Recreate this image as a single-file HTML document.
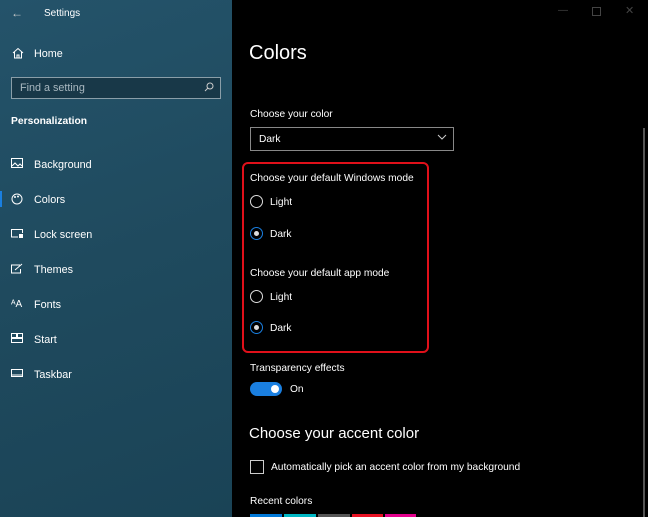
<!DOCTYPE html>
<html><head><style>
body{margin:0;width:648px;height:517px;overflow:hidden;background:#000;font-family:"Liberation Sans",sans-serif;position:relative}
.side{position:absolute;left:0;top:0;width:232px;height:517px;background:linear-gradient(160deg,#24536a 0%,#1f4a5e 50%,#1a4356 100%);color:#fff}
.t{position:absolute;white-space:nowrap;margin-top:1px}
.side .t{font-size:10.8px}
.m .t{color:#fff;font-size:10.2px}
.radio{position:absolute;width:11px;height:11px;border:1.5px solid #ddd;border-radius:50%}
.radio.on{border-color:#1a7fe0}
.radio.on:after{content:"";position:absolute;left:3px;top:3px;width:5px;height:5px;border-radius:50%;background:#ddd}
</style></head><body>
<div class="side">
<div class="t" style="left:11px;top:5px;font-size:12px;color:#ccc">←</div>
<div class="t" style="left:44px;top:7px;font-size:10px">Settings</div>
<svg style="position:absolute;left:12px;top:47px" width="12" height="12" viewBox="0 0 12 12"><path d="M1 6L6 1.5L11 6M2.5 5v6h7V5M5 11V8h2v3" stroke="#fff" fill="none"/></svg>
<div class="t" style="left:34px;top:47px">Home</div>
<div style="position:absolute;left:11px;top:77px;width:208px;height:20px;border:1px solid #8a9ea8;background:#183848"></div>
<div class="t" style="left:20px;top:81px;color:#a9b8c0">Find a setting</div>
<svg style="position:absolute;left:204px;top:82px" width="10" height="10"><circle cx="6" cy="4" r="3" stroke="#ccc" fill="none"/><path d="M4 6L1 9" stroke="#ccc"/></svg>
<div class="t" style="left:11px;top:115px;font-weight:bold;font-size:10.3px">Personalization</div>
<div style="position:absolute;left:0;top:191px;width:2px;height:16px;background:#1a7fe0"></div>
<svg style="position:absolute;left:11px;top:158px" width="12" height="10"><rect x=".5" y=".5" width="11" height="9" stroke="#fff" fill="none"/><path d="M1 8l3-3 3 3 2-2 2 2" stroke="#fff" fill="none"/></svg>
<div class="t" style="left:34px;top:158px">Background</div>
<svg style="position:absolute;left:11px;top:193px" width="12" height="12"><circle cx="6" cy="6" r="5" stroke="#fff" fill="none"/><circle cx="4" cy="4" r="1" fill="#fff"/><circle cx="7" cy="3.5" r="1" fill="#fff"/></svg>
<div class="t" style="left:34px;top:193px">Colors</div>
<svg style="position:absolute;left:11px;top:229px" width="12" height="10"><path d="M7 8H.5V.5h11V4" stroke="#fff" fill="none"/><rect x="8" y="5" width="4" height="4" fill="#fff"/></svg>
<div class="t" style="left:34px;top:228px">Lock screen</div>
<svg style="position:absolute;left:11px;top:263px" width="12" height="11"><path d="M9 2H.5v8h9V6" stroke="#fff" fill="none"/><path d="M4 7L11 1" stroke="#fff"/></svg>
<div class="t" style="left:34px;top:263px">Themes</div>
<div class="t" style="left:11px;top:298px;font-size:10px">ᴬA</div>
<div class="t" style="left:34px;top:298px">Fonts</div>
<svg style="position:absolute;left:11px;top:333px" width="12" height="10"><rect x=".5" y=".5" width="5" height="4" stroke="#fff" fill="none"/><rect x="6.5" y=".5" width="5" height="4" stroke="#fff" fill="none"/><rect x=".5" y="5.5" width="11" height="4" stroke="#fff" fill="none"/></svg>
<div class="t" style="left:34px;top:333px">Start</div>
<svg style="position:absolute;left:11px;top:369px" width="12" height="8"><rect x=".5" y=".5" width="11" height="7" stroke="#fff" fill="none"/><path d="M1 6h10" stroke="#fff"/></svg>
<div class="t" style="left:34px;top:368px">Taskbar</div>
</div>
<div class="m">
<div class="t" style="left:558px;top:4px;color:#444;font-size:10px">—</div>
<div style="position:absolute;left:592px;top:7px;width:7px;height:7px;border:1px solid #444"></div>
<div class="t" style="left:625px;top:3px;color:#444;font-size:11px">✕</div>
<div style="position:absolute;left:643px;top:128px;width:2px;height:389px;background:#555"></div>
<div class="t" style="left:249px;top:41px;font-size:20px">Colors</div>
<div class="t" style="left:250px;top:108px">Choose your color</div>
<div style="position:absolute;left:250px;top:127px;width:202px;height:22px;border:1.5px solid #888"></div>
<div class="t" style="left:259px;top:133px">Dark</div>
<svg style="position:absolute;left:437px;top:134px" width="10" height="6"><path d="M1 1l4 4 4-4" stroke="#ccc" fill="none"/></svg>
<div style="position:absolute;left:242px;top:162px;width:183px;height:187px;border:2px solid #e0101a;border-radius:6px"></div>
<div class="t" style="left:250px;top:172px">Choose your default Windows mode</div>
<div class="radio" style="left:250px;top:195px"></div><div class="t" style="left:270px;top:196px">Light</div>
<div class="radio on" style="left:250px;top:227px"></div><div class="t" style="left:270px;top:228px">Dark</div>
<div class="t" style="left:250px;top:267px">Choose your default app mode</div>
<div class="radio" style="left:250px;top:290px"></div><div class="t" style="left:270px;top:291px">Light</div>
<div class="radio on" style="left:250px;top:321px"></div><div class="t" style="left:270px;top:322px">Dark</div>
<div class="t" style="left:250px;top:362px">Transparency effects</div>
<div style="position:absolute;left:250px;top:382px;width:32px;height:14px;border-radius:7px;background:#1a7fe0"></div>
<div style="position:absolute;left:271px;top:385px;width:8px;height:8px;border-radius:50%;background:#fff"></div>
<div class="t" style="left:290px;top:383px">On</div>
<div class="t" style="left:249px;top:424px;font-size:15px">Choose your accent color</div>
<div style="position:absolute;left:250px;top:460px;width:12px;height:12px;border:1.5px solid #ccc"></div>
<div class="t" style="left:271px;top:461px">Automatically pick an accent color from my background</div>
<div class="t" style="left:250px;top:495px">Recent colors</div>
<div style="position:absolute;left:250px;top:514px;width:32px;height:3px;background:#0078d7"></div>
<div style="position:absolute;left:284px;top:514px;width:32px;height:3px;background:#00b7c3"></div>
<div style="position:absolute;left:318px;top:514px;width:32px;height:3px;background:#555"></div>
<div style="position:absolute;left:352px;top:514px;width:31px;height:3px;background:#e81123"></div>
<div style="position:absolute;left:385px;top:514px;width:31px;height:3px;background:#e3008c"></div>
</div>
</body></html>
